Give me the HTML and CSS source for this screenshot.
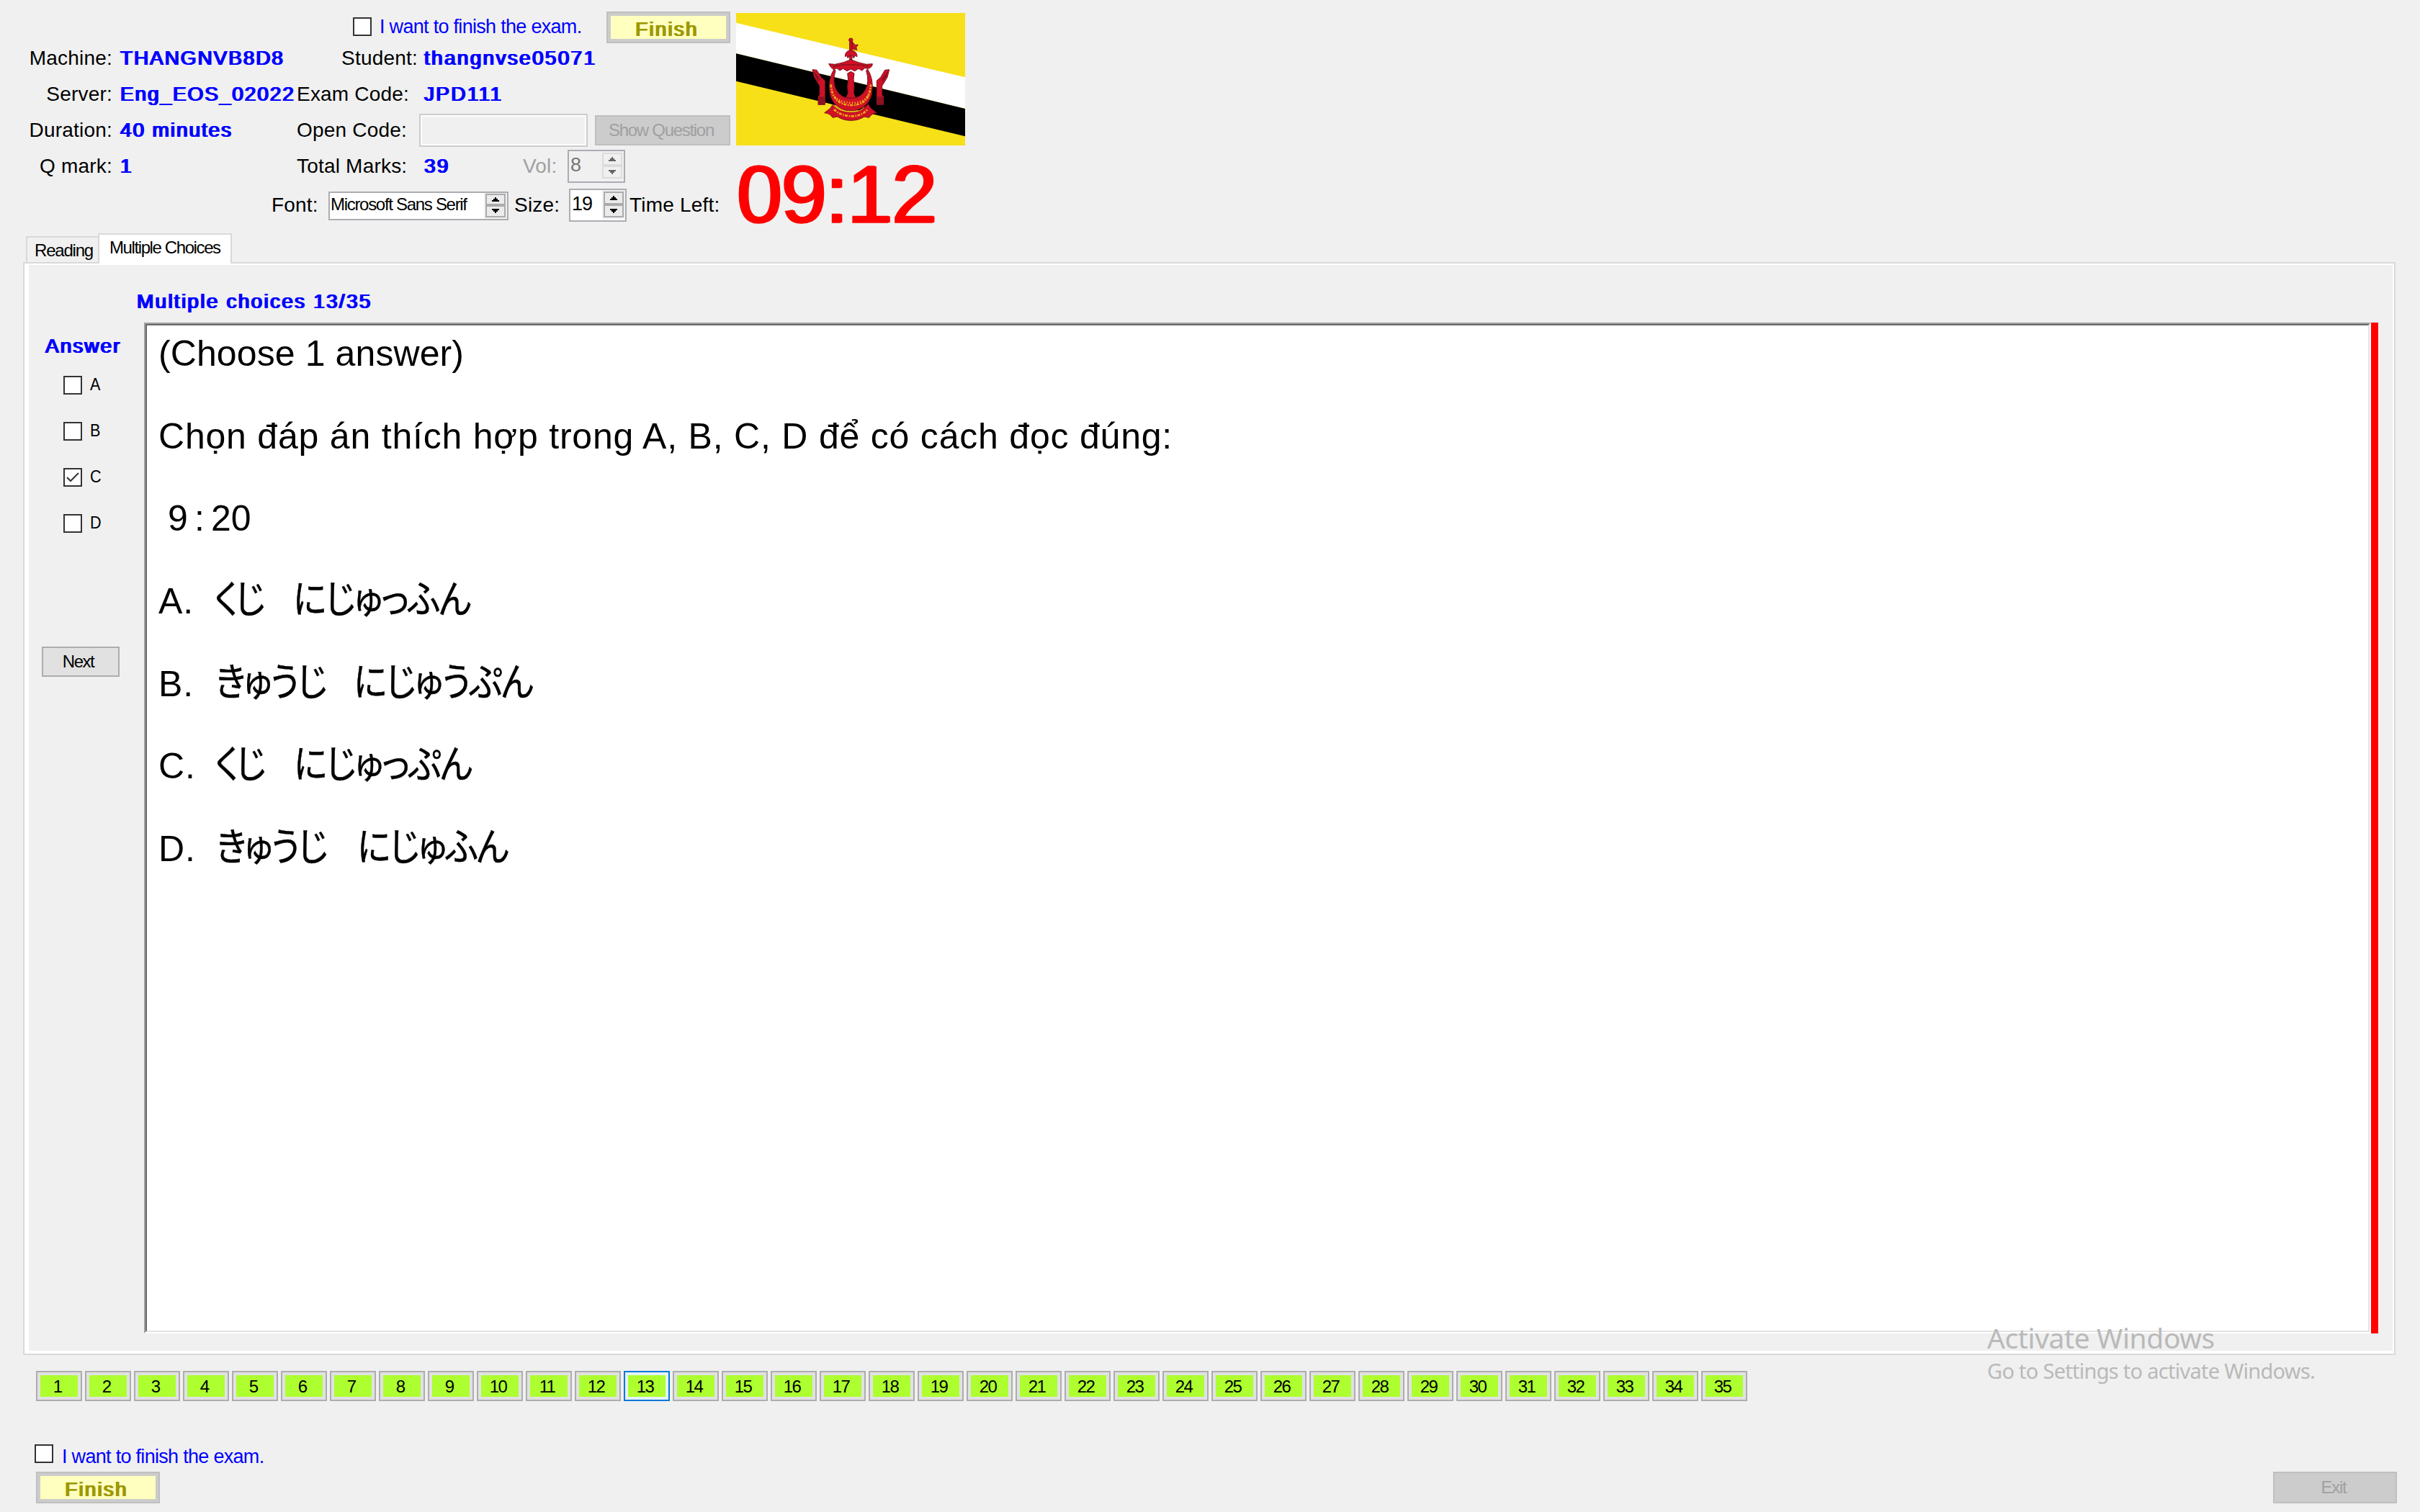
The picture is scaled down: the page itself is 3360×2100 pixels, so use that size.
FILE: index.html
```html
<!DOCTYPE html>
<html lang="vi">
<head>
<meta charset="utf-8">
<title>Exam</title>
<link rel="stylesheet" href="styles.css">
</head>
<body>
<header class="header">
  <div class="info">
    <div class="row row-top">
      <span class="check"></span><span class="agree">I want to finish the exam.</span>
      <button class="finish">Finish</button>
    </div>
    <div class="row">
      <span class="lab">Machine:</span><span class="val">THANGNVB8D8</span>
      <span class="lab2 lab-student">Student:</span><span class="val2 val-student">thangnvse05071</span>
    </div>
    <div class="row">
      <span class="lab">Server:</span><span class="val">Eng_EOS_02022</span>
      <span class="lab2">Exam Code:</span><span class="val2">JPD111</span>
    </div>
    <div class="row">
      <span class="lab">Duration:</span><span class="val">40 minutes</span>
      <span class="lab2">Open Code:</span><span class="code-input"></span>
      <button class="btn-off show">Show Question</button>
    </div>
    <div class="row">
      <span class="lab">Q mark:</span><span class="val">1</span>
      <span class="lab2">Total Marks:</span><span class="val2">39</span>
      <span class="vol">Vol:</span>
      <div class="num num-off"><span class="num-text">8</span>
        <div class="spin"><i><svg viewBox="0 0 10 6"><path d="M4 0h2v2h2v2h2v2H0V4h2V2h2z"/></svg></i><i><svg viewBox="0 0 10 6"><path d="M0 0h10v2H8v2H6v2H4V4H2V2H0z"/></svg></i></div>
      </div>
    </div>
    <div class="row row-font">
      <span class="font-lab">Font:</span>
      <div class="num num-font"><span class="font-name">Microsoft Sans Serif</span>
        <div class="spin"><i><svg viewBox="0 0 10 6"><path d="M4 0h2v2h2v2h2v2H0V4h2V2h2z"/></svg></i><i><svg viewBox="0 0 10 6"><path d="M0 0h10v2H8v2H6v2H4V4H2V2H0z"/></svg></i></div>
      </div>
      <span class="size-lab">Size:</span>
      <div class="num"><span class="num-text">19</span>
        <div class="spin"><i><svg viewBox="0 0 10 6"><path d="M4 0h2v2h2v2h2v2H0V4h2V2h2z"/></svg></i><i><svg viewBox="0 0 10 6"><path d="M0 0h10v2H8v2H6v2H4V4H2V2H0z"/></svg></i></div>
      </div>
      <span class="left-lab">Time Left:</span>
    </div>
  </div>
  <div class="side">
    <svg class="flag" viewBox="66 54 954 552" preserveAspectRatio="none">
      <path fill="#f7e017" d="M66 54h954v552H66z"/>
      <path fill="#fff" d="M66 95 1020 322V453L66 223z"/>
      <path fill="#000" d="M66 223 1020 453V568L66 338z"/>
      <g fill="#cf1126" stroke="#7d1220" stroke-width="3">
        <path d="M539 176h10v72h-10z"/>
        <circle cx="544" cy="167" r="8"/>
        <path d="M550 174 562 188 574 186 566 198 570 208 550 204z"/>
        <path d="M520 236C520 218 530 210 544 210S570 218 570 236L562 232 556 242 550 232H538L532 242 526 232z"/>
        <path d="M452 266 478 268Q515 262 544 248 575 262 608 268L634 266Q634 280 616 286L602 284 590 294 576 286 560 296 544 288 528 296 512 286 498 294 486 284 472 290Q458 280 452 266z"/>
        <path d="M530 306 544 298 558 306 555 330 558 360 556 388 564 408H524L532 388 530 360 533 330z"/>
        <path d="M474 288Q448 330 456 385C464 435 502 462 544 462S624 435 632 385Q640 330 614 288L608 294Q622 340 606 372 586 410 544 410T482 372Q466 340 480 294z"/>
        <path d="M470 434Q500 468 544 468T616 434L628 452 652 470Q630 472 620 490L600 486Q576 502 544 502T488 486L468 490Q458 472 434 470L458 452z"/>
        <path d="M384 290 402 292 420 322 436 336V436H408V402L414 396V358L392 322z"/>
        <path d="M704 290 686 292 668 322 652 336V436H680V402L674 396V358L696 322z"/>
      </g>
      <g fill="none" stroke="#f0a818" stroke-width="8" stroke-dasharray="12 5 5 4">
        <path d="M461 352Q466 436 544 438T627 352"/>
        <path stroke-dasharray="4 7" d="M470 395Q490 425 544 428T618 395"/>
        <path d="M474 456Q502 482 544 484T614 456"/>
      </g>
      <path fill="none" stroke="#f7e017" stroke-width="3" d="M470 438Q500 466 544 466T600 446"/>
      <path fill="none" stroke="#7d1220" stroke-width="4" d="M390 300 416 334M396 312 410 340M698 300 672 334M692 312 678 340M470 276Q544 262 618 276"/>
      <path fill="#8d1222" d="M409 403h28v32h-28zM651 403h28v32h-28z"/>
    </svg>
    <div class="timer">09:12</div>
  </div>
</header>

<nav class="tabs">
  <span class="tab">Reading</span><span class="tab tab-on">Multiple Choices</span>
</nav>

<main class="page"><div class="page-in">
  <h1 class="title">Multiple choices 13/35</h1>
  <div class="work">
    <aside class="answers">
      <h2 class="answer-title">Answer</h2>
      <label class="opt"><span class="check"></span><span>A</span></label>
      <label class="opt"><span class="check"></span><span>B</span></label>
      <label class="opt"><span class="check"><svg viewBox="0 0 22 22"><path d="M3 11 8 16 19 5"/></svg></span><span>C</span></label>
      <label class="opt"><span class="check"></span><span>D</span></label>
      <button class="next">Next</button>
    </aside>
    <div class="sheet"><div class="sheet-in">
      <p>(Choose 1 answer)</p>
      <p class="ask">Chọn đáp án thích hợp trong A, B, C, D để có cách đọc đúng:</p>
      <p class="clock">9<span class="colon">:</span>20</p>
      <p class="line"><span class="key">A.</span><span class="w short">くじ</span><span class="w">にじゅっふん</span></p>
      <p class="line"><span class="key key-b">B.</span><span class="w long">きゅうじ</span><span class="w">にじゅうぷん</span></p>
      <p class="line"><span class="key key-c">C.</span><span class="w short">くじ</span><span class="w">にじゅっぷん</span></p>
      <p class="line"><span class="key key-d">D.</span><span class="w long">きゅうじ</span><span class="w">にじゅふん</span></p>
    </div></div>
    <div class="redbar"></div>
  </div>
</div></main>

<nav class="numbers">
  <button>1</button><button>2</button><button>3</button><button>4</button><button>5</button><button>6</button><button>7</button><button>8</button><button>9</button><button>10</button><button>11</button><button>12</button><button class="current">13</button><button>14</button><button>15</button><button>16</button><button>17</button><button>18</button><button>19</button><button>20</button><button>21</button><button>22</button><button>23</button><button>24</button><button>25</button><button>26</button><button>27</button><button>28</button><button>29</button><button>30</button><button>31</button><button>32</button><button>33</button><button>34</button><button>35</button>
</nav>

<footer class="footer">
  <div class="foot-check"><span class="check"></span><span class="agree">I want to finish the exam.</span></div>
  <div class="foot-btns"><button class="finish">Finish</button><button class="btn-off exit">Exit</button></div>
</footer>

<div class="watermark"><div class="wm-title">Activate Windows</div><div class="wm-text">Go to Settings to activate Windows.</div></div>
</body>
</html>
```
FILE: styles.css
```css
* { box-sizing: border-box; margin: 0; padding: 0; }
body {
  width: 3360px; height: 2100px; overflow: hidden; position: relative;
  background: #f0f0f0; color: #000;
  font: 28px/32px "Liberation Sans", Arial, sans-serif;
}
button { font: inherit; display: block; flex: none; border-radius: 0; }
span { white-space: nowrap; }

/* bold labels are drawn as a regular face thickened sideways */
.val, .val2, .finish, .title, .answer-title {
  font-weight: normal; letter-spacing: 2.1px;
  text-shadow: 1px 0 0 currentColor, 2px 0 0 currentColor;
}

/* header */
.header { display: flex; height: 324px; }
.info { width: 1022px; flex: none; }
.row { display: flex; align-items: center; height: 50px; letter-spacing: .2px; }
.row > * { flex: none; }
.row-top { height: 56px; align-items: flex-start; padding: 16px 0 0 490px; letter-spacing: 0; }
.row-top .check { margin-top: 8px; }
.row-top .agree { margin-top: 5px; width: 314px; }
.check { display: block; width: 26px; height: 26px; border: 2px solid #333; background: #fff; flex: none; }
.check svg { display: block; width: 22px; height: 22px; fill: none; stroke: #333; stroke-width: 2; }
.agree { color: #00f; font-size: 27px; letter-spacing: -.7px; margin-left: 11px; }
.finish {
  width: 172px; height: 44px; border: 2px solid #bfbfbf; color: #9c9800;
  background: #ffffbf; box-shadow: inset 0 0 0 4px #ccc;
  line-height: 32px; padding: 5px 6px 0 0;
}
.row-top .finish { margin-left: 1px; }
.lab { width: 156px; text-align: right; }
.val, .val2 { color: #00f; }
.val { margin-left: 10px; width: 246px; letter-spacing: 1.9px; }
.lab2 { width: 153px; text-align: right; }
.lab-student { width: 168px; }
.val2 { margin-left: 23px; width: 138px; letter-spacing: 2.3px; }
.val-student { margin-left: 8px; width: auto; }
.code-input { margin-left: 17px; width: 234px; height: 46px; border: 2px solid #ccc; box-shadow: inset 0 0 0 2px #fff; }
.btn-off { border: 2px solid #bfbfbf; background: #ccc; color: #a0a0a0; font-size: 24px; letter-spacing: -1.3px; }
.show { margin-left: 10px; width: 188px; height: 42px; padding-right: 4px; }
.vol { color: #a0a0a0; width: 62px; }
.num { display: flex; width: 80px; height: 46px; border: 2px solid #abadb3; background: #fff; justify-content: space-between; align-items: flex-start; }
.num-text { padding: 2px 0 0 2px; font-size: 27px; letter-spacing: -1px; line-height: 34px; }
.num-off { background: #f0f0f0; color: #777; }
.spin { display: flex; flex-direction: column; background: #f0f0f0; padding: 2px; height: 40px; }
.spin i { width: 28px; height: 18px; border: 2px solid #ababab; background: #ebebeb; display: flex; justify-content: center; align-items: center; }
.spin svg { width: 10px; height: 6px; display: block; }
.num-off .spin i { border-color: #dcdcdc; background: #f0f0f0; }
.num-off .spin path { fill: #666; }
.row-font { height: 58px; }
.font-lab { width: 79px; margin-left: 377px; }
.num-font { width: 250px; height: 40px; margin-top: 1px; }
.num-font .spin { height: 36px; padding-top: 1px; }
.num-font .spin i { height: 17px; }
.font-name { font-size: 24px; letter-spacing: -1.3px; padding-left: 1px; }
.size-lab { margin-left: 8px; width: 76px; }
.left-lab { margin-left: 4px; }
.flag { display: block; width: 318px; height: 184px; margin-top: 18px; }
.timer {
  color: #f00; font-size: 113px; line-height: 120px; letter-spacing: -1.2px; margin-top: 8px;
  -webkit-text-stroke: 1.5px #f00;
  text-shadow: 1px 0 0 currentColor, 2px 0 0 currentColor, 3px 0 0 currentColor;
}

/* tabs */
.tabs { display: flex; align-items: flex-end; height: 40px; padding-left: 36px; font-size: 24px; letter-spacing: -1.2px; }
.tab { width: 100px; height: 36px; border: 2px solid #d9d9d9; border-width: 2px 0 0 2px; padding-left: 10px; line-height: 36px; }
.tab-on { width: 186px; height: 42px; margin-bottom: -2px; background: #fff; border-width: 2px 2px 0; padding-left: 14px; letter-spacing: -1.4px; position: relative; }

/* tab page */
.page { margin-left: 32px; width: 3294px; height: 1518px; border: 2px solid #d9d9d9; }
.page-in { height: 1514px; border: solid #fff; border-width: 2px 2px 4px 6px; }
.title, .answer-title { font-size: 28px; color: #00f; line-height: 32px; }
.title { height: 80px; padding: 35px 0 0 149px; letter-spacing: 2.25px; }
.work { display: flex; height: 1404px; }
.answers { width: 160px; flex: none; padding-top: 17px; }
.answer-title { padding-left: 22px; margin-bottom: 6px; letter-spacing: 2px; }
.opt { display: flex; align-items: center; height: 64px; padding-left: 48px; gap: 11px; font-size: 24px; }
.opt span + span { padding-bottom: 3px; transform: scaleX(.9); transform-origin: left; }
.next { margin: 139px 0 0 18px; width: 108px; height: 42px; border: 2px solid #adadad; background: #e1e1e1; font-size: 24px; letter-spacing: -1.5px; padding-right: 7px; }
.sheet { width: 3092px; flex: none; border: 2px solid; border-color: #a0a0a0 #fff #fff #a0a0a0; }
.sheet-in {
  height: 100%; background: #fff; border: 2px solid; border-color: #696969 #e3e3e3 #e3e3e3 #696969;
  padding: 9px 0 0 16px; display: flex; flex-direction: column; gap: 54.67px;
  font-size: 50px; line-height: 60px;
}
.sheet-in p { height: 60px; white-space: nowrap; letter-spacing: .1px; }
.sheet-in .ask { letter-spacing: .79px; }
.sheet-in .clock { padding-left: 13px; }
.colon { margin: 0 9px 0 9px; }
.line { display: flex; align-items: flex-start; }
.line .key { width: 78px; letter-spacing: 1px; }
.line .key-b, .line .key-c { width: 79px; }
.line .key-d { width: 80px; }
.w {
  font-family: "Noto Sans CJK JP", sans-serif; font-size: 54px; line-height: 60px; margin-top: -6px;
  font-feature-settings: "palt"; letter-spacing: -2px; transform: scaleX(.89); transform-origin: left;
  -webkit-text-stroke: .5px #000;
}
.short { width: 109px; letter-spacing: -5px; }
.long { width: 192px; letter-spacing: -3px; }
.key-d + .long { width: 196px; }
.redbar { width: 10px; background: #f00; }

/* question numbers */
.numbers { display: flex; gap: 4px; padding: 22px 0 0 50px; }
.numbers button { width: 64px; height: 42px; border: 2px solid #adadad; background: #adff2f; box-shadow: inset 0 0 0 4px #e1e1e1; font-size: 24px; letter-spacing: -1.7px; line-height: 36px; padding: 1px 5px 0 0; }
.numbers .current { border-color: #0078d7; box-shadow: inset 0 0 0 4px #e5f1fb; }

/* footer */
.footer { padding-top: 60px; }
.foot-check { display: flex; height: 38px; padding-left: 48px; }
.foot-check .agree { margin-left: 12px; padding-top: 1px; }
.foot-btns { display: flex; justify-content: space-between; padding: 0 32px 0 50px; }
.exit { width: 172px; height: 44px; padding-right: 4px; }

.watermark { position: absolute; left: 2759px; top: 1830px; color: #b9b9b9; font-family: "Noto Sans", sans-serif; white-space: nowrap; }
.wm-title { font-size: 39px; line-height: 56px; letter-spacing: -.4px; }
.wm-text { font-size: 29px; line-height: 36px; letter-spacing: -.72px; }
```
